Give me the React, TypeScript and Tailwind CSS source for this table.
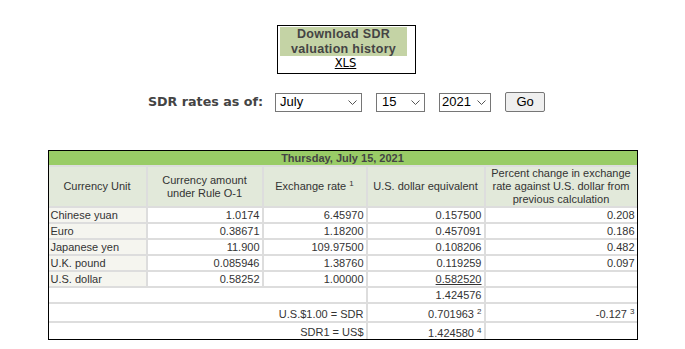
import React from "react";

function Chevron() {
  return (
    <svg width="9" height="5" viewBox="0 0 9 5" className="shrink-0 ml-auto mr-[4px]">
      <polyline points="0.5,0.5 4.5,4.5 8.5,0.5" fill="none" stroke="#555" strokeWidth="1" />
    </svg>
  );
}

export default function App() {
  const cell = "bg-white px-[2px] h-[14px] leading-[14px] text-right whitespace-nowrap";
  const first = "bg-[#f5f5ef] px-[2px] h-[14px] leading-[14px] text-left whitespace-nowrap";
  const head = "bg-[#e2e9da] flex items-center justify-center text-center leading-[13px] h-[39px] px-[2px]";
  const rows: [string, string, string, string, string][] = [
    ["Chinese yuan", "1.0174", "6.45970", "0.157500", "0.208"],
    ["Euro", "0.38671", "1.18200", "0.457091", "0.186"],
    ["Japanese yen", "11.900", "109.97500", "0.108206", "0.482"],
    ["U.K. pound", "0.085946", "1.38760", "0.119259", "0.097"],
    ["U.S. dollar", "0.58252", "1.00000", "0.582520", ""],
  ];
  return (
    <div className="w-[685px] h-[349px] bg-white overflow-hidden">
      <div className="flex flex-col items-center pt-[25px]">
        {/* Download box */}
        <div className="ml-[8px] w-[139px] h-[49px] border border-black pt-[1px] pl-[2px] flex flex-col">
          <div className="w-[127px] h-[29px] bg-[#c4d3a5] text-center font-bold text-[#444] text-[12.5px] leading-[14.5px] tracking-[0.3px] font-['Liberation_Sans',Arial,sans-serif]">
            <div>Download SDR</div>
            <div>valuation history</div>
          </div>
          <div className="pr-[4px] mt-[1px] text-center text-[11.5px] leading-[13px] text-black underline font-['DejaVu_Sans',sans-serif]">
            XLS
          </div>
        </div>

        {/* Form row */}
        <div className="ml-[8px] mt-[18px] flex items-center h-[20px] font-['Liberation_Sans',Arial,sans-serif] text-[13px] text-black">
          <span className="font-bold text-[12.7px] text-[#444] font-['DejaVu_Sans',sans-serif] mr-[12px]">
            SDR rates as of:
          </span>
          <div className="w-[87px] h-[19px] border border-[#767676] bg-white flex items-center pl-[4px]">
            <span>July</span>
            <Chevron />
          </div>
          <div className="ml-[14px] w-[49px] h-[19px] border border-[#767676] bg-white flex items-center pl-[5px]">
            <span>15</span>
            <Chevron />
          </div>
          <div className="ml-[14px] w-[52px] h-[19px] border border-[#767676] bg-white flex items-center pl-[2px]">
            <span>2021</span>
            <Chevron />
          </div>
          <div className="ml-[14px] w-[40px] h-[20px] border border-[#767676] rounded-[2px] bg-[#efefef] flex items-center justify-center">
            Go
          </div>
        </div>

        {/* Table */}
        <div className="mt-[38px] border border-black font-['Liberation_Sans',Arial,sans-serif] text-[11px] text-[#333]">
          <div className="grid grid-cols-[97px_114px_102px_116px_151px] gap-[2px] bg-[#dddddd]">
            <div className="col-span-5 bg-[#99cc66] h-[14px] leading-[14px] text-center font-bold text-[#444]">
              Thursday, July 15, 2021
            </div>
            <div className={head}>Currency Unit</div>
            <div className={head}>
              Currency amount
              <br />
              under Rule O-1
            </div>
            <div className={head}>
              <span>
                Exchange rate <sup className="text-[8px]">1</sup>
              </span>
            </div>
            <div className={head}>U.S. dollar equivalent</div>
            <div className={head}>
              Percent change in exchange
              <br />
              rate against U.S. dollar from
              <br />
              previous calculation
            </div>
            {rows.map((r) => (
              <React.Fragment key={r[0]}>
                <div className={first}>{r[0]}</div>
                <div className={cell}>{r[1]}</div>
                <div className={cell}>{r[2]}</div>
                <div className={cell}>
                  {r[0] === "U.S. dollar" ? <span className="underline">{r[3]}</span> : r[3]}
                </div>
                <div className={cell}>{r[4]}</div>
              </React.Fragment>
            ))}
            <div className="col-span-3 bg-white h-[14px]"></div>
            <div className={cell}>1.424576</div>
            <div className="bg-white h-[14px]"></div>

            <div className="col-span-3 bg-white h-[17px] pt-[3px] px-[2px] leading-[14px] text-right">
              U.S.$1.00 = SDR
            </div>
            <div className="bg-white h-[17px] pt-[3px] px-[2px] leading-[14px] text-right whitespace-nowrap">
              0.701963 <sup className="text-[8px]">2</sup>
            </div>
            <div className="bg-white h-[17px] pt-[3px] px-[2px] leading-[14px] text-right whitespace-nowrap">
              -0.127 <sup className="text-[8px]">3</sup>
            </div>

            <div className="col-span-3 bg-white h-[16px] pt-[2px] px-[2px] leading-[14px] text-right">
              SDR1 = US$
            </div>
            <div className="bg-white h-[16px] pt-[3px] px-[2px] leading-[14px] text-right whitespace-nowrap">
              1.424580 <sup className="text-[8px]">4</sup>
            </div>
            <div className="bg-white h-[16px]"></div>
          </div>
        </div>
      </div>
    </div>
  );
}
